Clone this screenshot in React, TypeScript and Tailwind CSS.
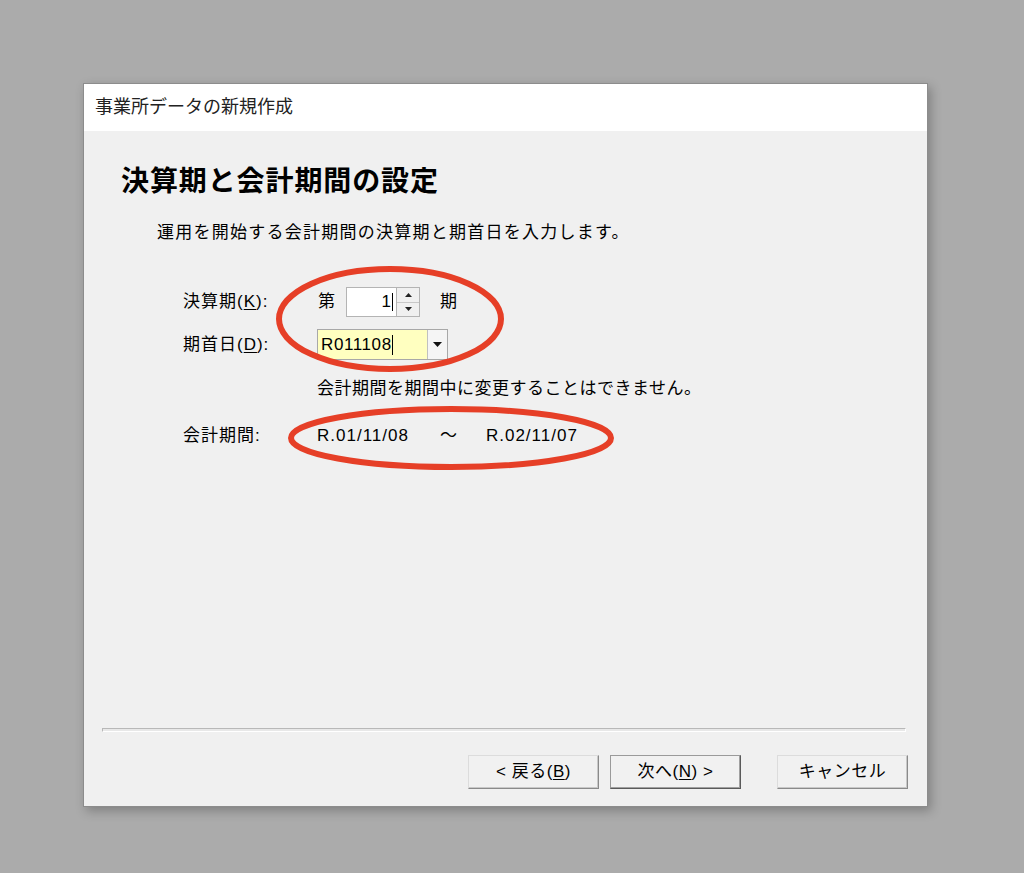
import React from 'react';

const font = { fontFamily: '"Liberation Sans", "Noto Sans CJK JP", sans-serif' };

function Btn({ children, primary }: { children: React.ReactNode; primary?: boolean }) {
  return (
    <div
      className={
        'flex h-[34px] w-[131px] items-center justify-center border bg-[#f1f1f1] text-[17px] tracking-[0.5px] text-black ' +
        (primary
          ? 'border-t-[#9a9a9a] border-l-[#9a9a9a] border-r-[#5a5a5a] border-b-[#5a5a5a] shadow-[inset_-1px_-1px_0_#a0a0a0]'
          : 'border-t-[#dcdcdc] border-l-[#dcdcdc] border-r-[#8a8a8a] border-b-[#8a8a8a] shadow-[inset_-1px_-1px_0_#c8c8c8]')
      }
    >
      {children}
    </div>
  );
}

export default function App() {
  return (
    <div className="min-h-[873px] w-[1024px] bg-[#ababab] pt-[83px] pl-[83px]" style={font}>
      <div className="relative flex h-[724px] w-[845px] flex-col border border-[#8c8c8c] bg-[#f0f0f0] shadow-[3px_4px_10px_rgba(0,0,0,0.25)]">
        {/* title */}
        <div className="flex h-[47px] items-center bg-white pl-[11px] text-[18px] text-[#222]">
          事業所データの新規作成
        </div>

        <div className="flex flex-1 flex-col">
          <h1 className="pt-[34px] pl-[37px] text-[28px] font-bold leading-[34px] tracking-[0.9px] text-black">
            決算期と会計期間の設定
          </h1>
          <p className="mt-[22px] pl-[73px] text-[17px] leading-[24px] tracking-[1.25px] text-black">
            運用を開始する会計期間の決算期と期首日を入力します。
          </p>

          <div className="mt-[42px] pl-[99px] text-[17px] tracking-[1px] text-black">
            {/* 決算期 */}
            <div className="flex h-[30px] items-center">
              <div className="w-[134px]">
                決算期(<span className="underline underline-offset-2">K</span>):
              </div>
              <span className="ml-px">第</span>
              <div className="ml-[10px] flex h-[30px]">
                <div className="flex w-[51px] items-center justify-end border border-[#b4b4b4] bg-white pr-[3px]">
                  1<span className="h-[18px] w-px bg-black" />
                </div>
                <div className="flex w-[23px] flex-col border border-l-0 border-[#b4b4b4] bg-[#f0f0f0]">
                  <div className="flex flex-1 items-center justify-center border-b border-[#c8c8c8]">
                    <svg width="7" height="4" viewBox="0 0 7 4"><path d="M3.5 0 L7 4 L0 4 Z" fill="#222" /></svg>
                  </div>
                  <div className="flex flex-1 items-center justify-center">
                    <svg width="7" height="4" viewBox="0 0 7 4"><path d="M0 0 L7 0 L3.5 4 Z" fill="#222" /></svg>
                  </div>
                </div>
              </div>
              <span className="ml-[20px]">期</span>
            </div>

            {/* 期首日 */}
            <div className="mt-[12px] flex h-[31px] items-center">
              <div className="w-[134px]">
                期首日(<span className="underline underline-offset-2">D</span>):
              </div>
              <div className="flex h-[31px] w-[131px] border border-[#a8a8a8] bg-[#ffffc0]">
                <div className="flex flex-1 items-center pl-[3px] tracking-[0.6px]">
                  R011108<span className="h-[20px] w-px bg-black" />
                </div>
                <div className="flex w-[20px] items-center justify-center border-l border-[#c0c0c0] bg-[#f5f5f5]">
                  <svg width="9" height="5" viewBox="0 0 9 5"><path d="M0 0 L9 0 L4.5 5 Z" fill="#111" /></svg>
                </div>
              </div>
            </div>

            <p className="mt-[17px] pl-[134px] leading-[24px] tracking-[0.5px]">会計期間を期間中に変更することはできません。</p>

            {/* 会計期間 */}
            <div className="mt-[23px] flex h-[24px] items-center">
              <div className="w-[134px]">会計期間:</div>
              <span>R.01/11/08</span>
              <span className="ml-[31px]">～</span>
              <span className="ml-[28px]">R.02/11/07</span>
            </div>
          </div>

          {/* footer */}
          <div className="mt-auto">
            <div className="mx-[18px] mr-[21px] h-[4px] border border-t-[#b8b8b8] border-l-[#b8b8b8] border-r-white border-b-white bg-[#e8e8e8]" />
            <div className="mt-[23px] mb-[17px] flex justify-end pr-[19px]">
              <Btn>&lt; 戻る(<span className="underline underline-offset-2">B</span>)</Btn>
              <div className="ml-[11px]">
                <Btn primary>
                  次へ(<span className="underline underline-offset-2">N</span>) &gt;
                </Btn>
              </div>
              <div className="ml-[36px]">
                <Btn>キャンセル</Btn>
              </div>
            </div>
          </div>
        </div>

        {/* red annotation ellipses */}
        <svg className="pointer-events-none absolute left-0 top-0" width="845" height="724">
          <ellipse cx="306" cy="235" rx="111" ry="50" fill="none" stroke="#e63f27" strokeWidth="6" />
          <ellipse cx="367" cy="354" rx="160" ry="29" fill="none" stroke="#e63f27" strokeWidth="6" />
        </svg>
      </div>
    </div>
  );
}
